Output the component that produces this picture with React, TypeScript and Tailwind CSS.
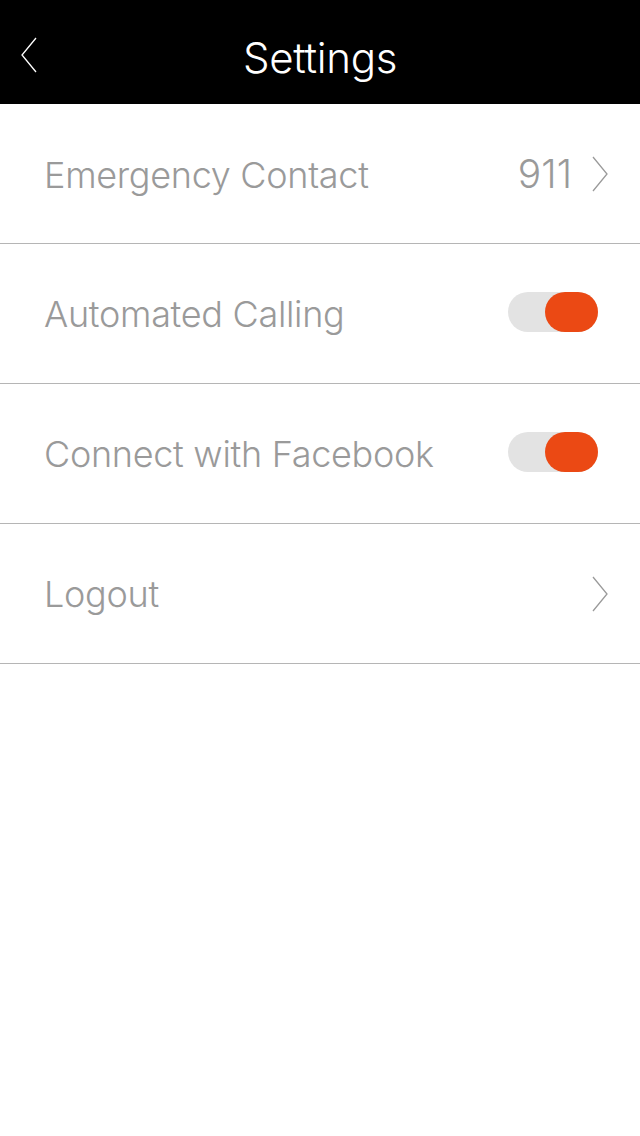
import React, { useState } from "react";

const font = { fontFamily: "Inter, 'Liberation Sans', sans-serif" };

const Chevron = ({ dir = "right", className = "" }: { dir?: "left" | "right"; className?: string }) => (
  <svg width="16" height="36" viewBox="0 0 16 36" className={className} fill="none">
    {dir === "right" ? (
      <path d="M1 1 L15 18 L1 35" stroke="currentColor" strokeWidth="1.3" />
    ) : (
      <path d="M15 1 L1 18 L15 35" stroke="currentColor" strokeWidth="1.3" />
    )}
  </svg>
);

const Toggle = ({ on, onClick }: { on: boolean; onClick: () => void }) => (
  <button
    onClick={onClick}
    className={`relative w-[90px] h-[40px] rounded-full bg-[#e3e3e3] flex items-center ${on ? "justify-end" : "justify-start"}`}
  >
    <span className="block w-[53px] h-[40px] rounded-full bg-[#eb4914]" />
  </button>
);

const Row = ({ children }: { children: React.ReactNode }) => (
  <div className="h-[140px] flex items-center justify-between pl-[44px] border-b border-[#b5b5b5]">
    {children}
  </div>
);

export default function App() {
  const [calling, setCalling] = useState(true);
  const [facebook, setFacebook] = useState(true);

  return (
    <div className="w-[640px] h-[1136px] bg-white" style={font}>
      {/*<--- Header --->*/}
      <div className="relative h-[104px] bg-black flex items-center justify-center pt-[10px]">
        <button className="absolute left-[21px] top-[37px] text-white">
          <Chevron dir="left" />
        </button>
        <h1 className="text-white text-[42px] font-light tracking-[-0.3px]">Settings</h1>
      </div>

      <Row>
        <span className="text-[#9a9a9a] text-[36px] font-light tracking-[-0.3px] pt-[2px]">Emergency Contact</span>
        <div className="flex items-center pr-[32px] gap-[20px] text-[#9a9a9a]">
          <span className="text-[39px] font-light pt-[2px]">911</span>
          <Chevron />
        </div>
      </Row>

      <Row>
        <span className="text-[#9a9a9a] text-[36px] font-light tracking-[-0.3px]">Automated Calling</span>
        <div className="pr-[42px] pb-[3px]">
          <Toggle on={calling} onClick={() => setCalling(!calling)} />
        </div>
      </Row>

      <Row>
        <span className="text-[#9a9a9a] text-[36px] font-light tracking-[-0.3px]">Connect with Facebook</span>
        <div className="pr-[42px] pb-[3px]">
          <Toggle on={facebook} onClick={() => setFacebook(!facebook)} />
        </div>
      </Row>

      <Row>
        <span className="text-[#9a9a9a] text-[36px] font-light tracking-[-0.3px]">Logout</span>
        <div className="pr-[32px] text-[#9a9a9a]">
          <Chevron />
        </div>
      </Row>
    </div>
  );
}
